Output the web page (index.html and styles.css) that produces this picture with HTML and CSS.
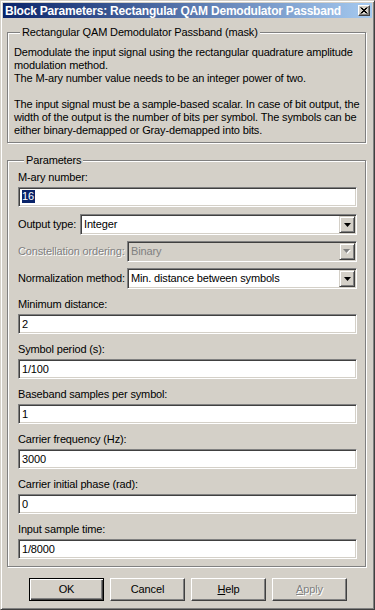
FILE: index.html
```html
<!DOCTYPE html>
<html>
	<head>
		<title>Block Parameters</title>
		<meta charset="UTF-8">
		<link rel="stylesheet" href="styles.css">
	</head>
	<body>
		<div class="window">
			<div class="titlebar">
				<span class="title">Block Parameters: Rectangular QAM Demodulator Passband</span>
				<span class="close">
					<svg width="8" height="7" viewBox="0 0 8 7"><path d="M0.5 0.5 L6.5 6.5 M1.5 0.5 L7.5 6.5 M6.5 0.5 L0.5 6.5 M7.5 0.5 L1.5 6.5" stroke="#000" stroke-width="1" fill="none"/></svg>
				</span>
			</div>

			<fieldset class="group mask">
				<legend>Rectangular QAM Demodulator Passband (mask)</legend>
				<p class="desc">Demodulate the input signal using the rectangular quadrature amplitude<br>modulation method.<br>The M-ary number value needs to be an integer power of two.</p>
				<p class="desc">The input signal must be a sample-based scalar. In case of bit output, the<br>width of the output is the number of bits per symbol. The symbols can be<br>either binary-demapped or Gray-demapped into bits.</p>
			</fieldset>

			<fieldset class="group params">
				<legend>Parameters</legend>
				<div class="field first">
					<div class="lbl">M-ary number:</div>
					<div class="edit"><span class="selected">16</span></div>
				</div>
				<div class="row first-row">
					<div class="lbl lbl-short">Output type:</div>
					<div class="combo"><span class="val">Integer</span><span class="arrow"><svg width="7" height="4" viewBox="0 0 7 4"><path d="M0 0 H7 L3.5 4 Z" fill="#000"/></svg></span></div>
				</div>
				<div class="row">
					<div class="lbl lbl-long off">Constellation ordering:</div>
					<div class="combo disabled"><span class="val">Binary</span><span class="arrow"><svg width="8" height="5" viewBox="0 0 8 5"><path d="M1 1 H8 L4.5 5 Z" fill="#fff"/><path d="M0 0 H7 L3.5 4 Z" fill="#808080"/></svg></span></div>
				</div>
				<div class="row">
					<div class="lbl lbl-long">Normalization method:</div>
					<div class="combo"><span class="val">Min. distance between symbols</span><span class="arrow"><svg width="7" height="4" viewBox="0 0 7 4"><path d="M0 0 H7 L3.5 4 Z" fill="#000"/></svg></span></div>
				</div>
				<div class="field">
					<div class="lbl">Minimum distance:</div>
					<div class="edit">2</div>
				</div>
				<div class="field">
					<div class="lbl">Symbol period (s):</div>
					<div class="edit">1/100</div>
				</div>
				<div class="field">
					<div class="lbl">Baseband samples per symbol:</div>
					<div class="edit">1</div>
				</div>
				<div class="field">
					<div class="lbl">Carrier frequency (Hz):</div>
					<div class="edit">3000</div>
				</div>
				<div class="field">
					<div class="lbl">Carrier initial phase (rad):</div>
					<div class="edit">0</div>
				</div>
				<div class="field">
					<div class="lbl">Input sample time:</div>
					<div class="edit">1/8000</div>
				</div>
			</fieldset>

			<div class="buttons">
				<div class="btn default">OK</div>
				<div class="btn">Cancel</div>
				<div class="btn"><u>H</u>elp</div>
				<div class="btn disabled"><u>A</u>pply</div>
			</div>
		</div>
	</body>
</html>
```

FILE: styles.css
```css
body, html {
	margin: 0;
	padding: 0;
	background-color: #d4d0c8;
}
body {
	font-family: "Liberation Sans", Arial, sans-serif;
	font-size: 11px;
	letter-spacing: -0.15px;
	color: #000;
}

.window {
	width: 375px;
	height: 610px;
	box-sizing: border-box;
	border: 1px solid;
	border-color: #d4d0c8 #404040 #404040 #d4d0c8;
	box-shadow: inset 1px 1px #fff, inset -1px -1px #808080;
	padding: 2px;
	display: flex;
	flex-direction: column;
}

.titlebar {
	height: 15px;
	background: linear-gradient(to right, #0a246a, #a6caf0);
	display: flex;
	align-items: center;
	padding-left: 2px;
}
.title {
	flex: 1;
	color: #fff;
	font-weight: bold;
	font-size: 12px;
	letter-spacing: -0.2px;
	white-space: nowrap;
	overflow: hidden;
}
.close {
	width: 12px;
	height: 11px;
	box-sizing: border-box;
	margin-right: 2px;
	background-color: #d4d0c8;
	border: 1px solid;
	border-color: #fff #404040 #404040 #fff;
	box-shadow: inset -1px -1px #808080;
	display: flex;
	align-items: center;
	justify-content: center;
}
.close svg {
	display: block;
	margin-right: 1px;
}

.group {
	margin: 0 6px 0 4px;
	padding: 0;
	min-width: 0;
	border: 1px solid #808080;
	box-shadow: inset 1px 1px #fff, 1px 1px #fff;
}
.group legend {
	margin-left: 6px;
	padding: 0 2px;
	line-height: 13px;
	background-color: #d4d0c8;
	white-space: nowrap;
}

.mask {
	margin-top: 8px;
	padding: 7px 4px 5px 6px;
}
.desc {
	margin: 0;
	line-height: 13px;
	white-space: nowrap;
}
.desc + .desc {
	margin-top: 13px;
}

.params {
	margin-top: 11px;
	padding: 4px 8px 7px 10px;
	display: flex;
	flex-direction: column;
}

.lbl {
	line-height: 13px;
	white-space: nowrap;
}
.off {
	color: #808080;
	text-shadow: 1px 1px #fff;
}

.field {
	margin-top: 9px;
	display: flex;
	flex-direction: column;
}
.field.first {
	margin-top: 0;
}
.field .lbl {
	margin-bottom: 3px;
}

.edit {
	height: 20px;
	box-sizing: border-box;
	background-color: #fff;
	border: 1px solid;
	border-color: #808080 #fff #fff #808080;
	box-shadow: inset 1px 1px #404040, inset -1px -1px #d4d0c8;
	padding: 0 3px;
	line-height: 18px;
	white-space: nowrap;
}
.selected {
	background-color: #0a246a;
	color: #fff;
	padding: 0 1px 0 0;
	display: inline-block;
	line-height: 13px;
	margin-top: 2px;
	vertical-align: top;
}

.row {
	margin-top: 6px;
	display: flex;
	align-items: center;
}
.row.first-row {
	margin-top: 7px;
}
.lbl-short {
	width: 62px;
	flex: none;
}
.lbl-long {
	width: 109px;
	flex: none;
}

.combo {
	flex: 1;
	height: 21px;
	box-sizing: border-box;
	background-color: #fff;
	border: 1px solid;
	border-color: #808080 #fff #fff #808080;
	box-shadow: inset 1px 1px #404040, inset -1px -1px #d4d0c8;
	padding: 1px;
	display: flex;
	align-items: stretch;
}
.combo.disabled {
	background-color: #d4d0c8;
	color: #808080;
}
.combo .val {
	flex: 1;
	padding-left: 2px;
	line-height: 17px;
	white-space: nowrap;
}
.arrow {
	width: 16px;
	box-sizing: border-box;
	background-color: #d4d0c8;
	border: 1px solid;
	border-color: #d4d0c8 #404040 #404040 #d4d0c8;
	box-shadow: inset 1px 1px #fff, inset -1px -1px #808080;
	display: flex;
	align-items: center;
	justify-content: center;
}
.arrow svg {
	display: block;
}

.buttons {
	margin-top: 11px;
	padding-left: 26px;
	display: flex;
	gap: 6px;
}
.btn {
	width: 75px;
	height: 23px;
	box-sizing: border-box;
	border: 1px solid;
	border-color: #fff #404040 #404040 #fff;
	box-shadow: inset -1px -1px #808080;
	text-align: center;
	line-height: 21px;
}
.btn.default {
	border-color: #000;
	box-shadow: inset 1px 1px #fff, inset -1px -1px #404040, inset -2px -2px #808080;
}
.btn.disabled {
	color: #808080;
	text-shadow: 1px 1px #fff;
}
```
